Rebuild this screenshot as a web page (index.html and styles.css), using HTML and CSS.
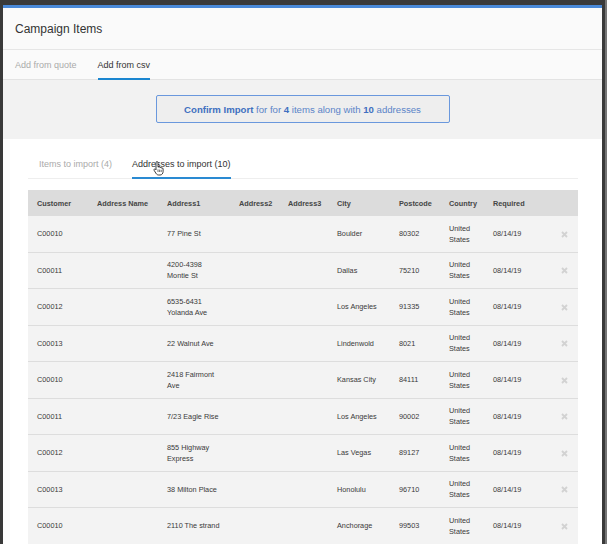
FILE: index.html
```html
<!DOCTYPE html>
<html lang="en">
  <head>
    <meta charset="UTF-8" />
    <title>Campaign Items</title>
    <link rel="stylesheet" href="styles.css">
  </head>
  <body>
    <div class="modal">
      <div class="modal-header">
        <h2>Campaign Items</h2>
      </div>
      <div class="tabs top-tabs">
        <span class="tab">Add from quote</span>
        <span class="tab active">Add from csv</span>
      </div>
      <div class="confirm-bar">
        <button class="confirm"><b>Confirm Import</b> for for <b>4</b> items along with <b>10</b> addresses</button>
      </div>
      <div class="import-panel">
        <div class="tabs sub-tabs">
          <span class="tab">Items to import (4)</span>
          <span class="tab active">Addresses to import (10)
            <svg class="cursor" width="11" height="15" viewBox="0 0 11 15">
              <path d="M3 1.6a1 1 0 0 1 2 0V6.2l.4-.3a1 1 0 0 1 1.5.7l.3-.2a1 1 0 0 1 1.4.8l.3-.1a.9.9 0 0 1 1.2.8V10.4c0 2-1.2 3.6-3 3.6H5.6c-1.2 0-2-.7-2.6-1.6L1.1 9.3a.9.9 0 0 1 1.4-1.1L3 8.8z" fill="#fff" stroke="#111" stroke-width="0.8" stroke-linejoin="round"/>
              <path d="M5 8.4v2.6M6.6 8.6v2.4M8.2 8.8v2.2" stroke="#111" stroke-width="0.6"/>
            </svg>
          </span>
        </div>
        <table class="addresses">
          <colgroup>
            <col style="width: 60px">
            <col style="width: 70px">
            <col style="width: 72px">
            <col style="width: 49px">
            <col style="width: 49px">
            <col style="width: 62px">
            <col style="width: 50px">
            <col style="width: 44px">
            <col style="width: 64px">
            <col style="width: 30px">
          </colgroup>
          <thead>
            <tr>
              <th>Customer</th>
              <th>Address Name</th>
              <th>Address1</th>
              <th>Address2</th>
              <th>Address3</th>
              <th>City</th>
              <th>Postcode</th>
              <th>Country</th>
              <th>Required</th>
              <th></th>
            </tr>
          </thead>
          <tbody>
            <tr>
              <td>C00010</td><td></td><td>77 Pine St</td><td></td><td></td>
              <td>Boulder</td><td>80302</td><td>United States</td><td>08/14/19</td>
              <td class="remove"><svg width="7" height="7" viewBox="0 0 7 7"><path d="M1 1l5 5M6 1l-5 5"/></svg></td>
            </tr>
            <tr>
              <td>C00011</td><td></td><td>4200-4398 Montie St</td><td></td><td></td>
              <td>Dallas</td><td>75210</td><td>United States</td><td>08/14/19</td>
              <td class="remove"><svg width="7" height="7" viewBox="0 0 7 7"><path d="M1 1l5 5M6 1l-5 5"/></svg></td>
            </tr>
            <tr>
              <td>C00012</td><td></td><td>6535-6431 Yolanda Ave</td><td></td><td></td>
              <td>Los Angeles</td><td>91335</td><td>United States</td><td>08/14/19</td>
              <td class="remove"><svg width="7" height="7" viewBox="0 0 7 7"><path d="M1 1l5 5M6 1l-5 5"/></svg></td>
            </tr>
            <tr>
              <td>C00013</td><td></td><td>22 Walnut Ave</td><td></td><td></td>
              <td>Lindenwold</td><td>8021</td><td>United States</td><td>08/14/19</td>
              <td class="remove"><svg width="7" height="7" viewBox="0 0 7 7"><path d="M1 1l5 5M6 1l-5 5"/></svg></td>
            </tr>
            <tr>
              <td>C00010</td><td></td><td>2418 Fairmont Ave</td><td></td><td></td>
              <td>Kansas City</td><td>84111</td><td>United States</td><td>08/14/19</td>
              <td class="remove"><svg width="7" height="7" viewBox="0 0 7 7"><path d="M1 1l5 5M6 1l-5 5"/></svg></td>
            </tr>
            <tr>
              <td>C00011</td><td></td><td>7/23 Eagle Rise</td><td></td><td></td>
              <td>Los Angeles</td><td>90002</td><td>United States</td><td>08/14/19</td>
              <td class="remove"><svg width="7" height="7" viewBox="0 0 7 7"><path d="M1 1l5 5M6 1l-5 5"/></svg></td>
            </tr>
            <tr>
              <td>C00012</td><td></td><td>855 Highway Express</td><td></td><td></td>
              <td>Las Vegas</td><td>89127</td><td>United States</td><td>08/14/19</td>
              <td class="remove"><svg width="7" height="7" viewBox="0 0 7 7"><path d="M1 1l5 5M6 1l-5 5"/></svg></td>
            </tr>
            <tr>
              <td>C00013</td><td></td><td>38 Milton Place</td><td></td><td></td>
              <td>Honolulu</td><td>96710</td><td>United States</td><td>08/14/19</td>
              <td class="remove"><svg width="7" height="7" viewBox="0 0 7 7"><path d="M1 1l5 5M6 1l-5 5"/></svg></td>
            </tr>
            <tr>
              <td>C00010</td><td></td><td>2110 The strand</td><td></td><td></td>
              <td>Anchorage</td><td>99503</td><td>United States</td><td>08/14/19</td>
              <td class="remove"><svg width="7" height="7" viewBox="0 0 7 7"><path d="M1 1l5 5M6 1l-5 5"/></svg></td>
            </tr>
          </tbody>
        </table>
      </div>
    </div>
  </body>
</html>
```

FILE: styles.css
```css
html,
body {
  height: 544px;
  overflow: hidden;
}
body {
  margin: 0;
  padding-top: 5px;
  box-sizing: border-box;
  font-family: "Liberation Sans", Arial, sans-serif;
  background: linear-gradient(to right, #3a3a3a 605px, #767676 605px);
  color: #333;
}
.modal {
  width: 599px;
  margin-left: 3px;
  background: #fafafa;
  border-top: 3px solid #4a89d8;
}
.modal-header {
  height: 41px;
  display: flex;
  align-items: center;
  padding-left: 12px;
  border-bottom: 1px solid #e6e6e6;
}
.modal-header h2 {
  margin: 0;
  font-size: 12px;
  font-weight: normal;
  color: #333;
}
.tabs {
  display: flex;
  box-sizing: border-box;
  height: 30px;
}
.tab {
  display: flex;
  align-items: center;
  position: relative;
  box-sizing: border-box;
  height: 100%;
  color: #aaa;
}
.tab.active {
  color: #333;
  border-bottom: 2px solid #1b86d0;
  padding-top: 2px;
}
.top-tabs {
  padding-left: 12px;
  gap: 21px;
  font-size: 9px;
  border-bottom: 1px solid #e3e3e3;
}
.top-tabs .tab.active {
  margin-bottom: -1px;
  height: 30px;
}
.confirm-bar {
  background: #f2f2f2;
  padding: 15px 0 16px;
  display: flex;
  justify-content: center;
}
.confirm {
  width: 294px;
  height: 28px;
  background: #eeeeee;
  border: 1px solid #6a98dd;
  border-radius: 2px;
  font-family: "Liberation Sans", Arial, sans-serif;
  font-size: 9.6px;
  color: #5b84c8;
}
.confirm b {
  color: #3f70c0;
}
.import-panel {
  background: #fff;
  padding: 10px 24px 0 25px;
  height: 420px;
}
.sub-tabs {
  padding-left: 11px;
  gap: 20px;
  font-size: 9px;
  border-bottom: 1px solid #eeeeee;
}
.sub-tabs .tab.active {
  margin-bottom: -1px;
  height: 30px;
  border-bottom-color: #2a8ad2;
}
.cursor {
  position: absolute;
  left: 21px;
  top: 12px;
}
.addresses {
  width: 550px;
  margin-top: 11px;
  table-layout: fixed;
  border-collapse: collapse;
  font-size: 7.3px;
  color: #3a3a3a;
}
.addresses th {
  height: 26px;
  padding: 0 9px;
  background: #dcdcdc;
  text-align: left;
  font-weight: bold;
  color: #454545;
}
.addresses td {
  height: 35.5px;
  padding: 0 9px;
  background: #f3f3f3;
  border-bottom: 1px solid #dddddd;
  line-height: 11px;
  vertical-align: middle;
}
.addresses td.remove {
  text-align: right;
  padding-right: 10px;
}
.remove svg {
  display: inline-block;
  vertical-align: middle;
}
.remove path {
  stroke: #d2d2d2;
  stroke-width: 1.8;
}
```
